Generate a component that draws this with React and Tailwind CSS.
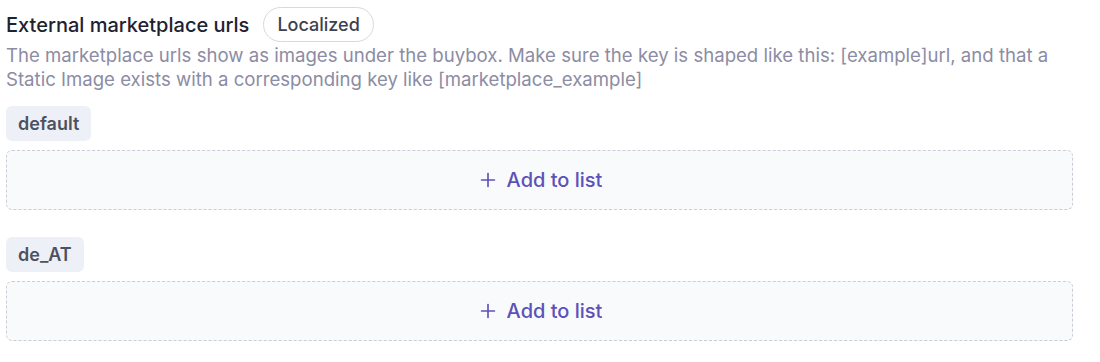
import { Plus } from "lucide-react"

const locales = ["default", "de_AT"]

function LocaleList({ name }) {
    return (
        <div className="flex flex-col items-start">
            <span className="h-[35px] px-3 flex items-center rounded-md bg-[#edf0f6] text-[18px] font-semibold text-[#4d5261]">
                {name}
            </span>
            <button className="mt-[9px] w-full h-[60px] flex items-center justify-center gap-[8px] rounded-md border border-dashed border-[#c9cdd4] bg-[#f8fafc] text-[#5d51b8] text-[20px] font-medium">
                <Plus size={22} strokeWidth={1.8} />
                Add to list
            </button>
        </div>
    )
}

export default function App() {
    return (
        <div className="w-[1100px] h-[362px] bg-white pl-[6px] pr-[27px] pt-[7px] font-['Inter',sans-serif]">
            {/* Header */}
            <div className="flex items-center gap-[14px]">
                <h3 className="text-[20px] font-medium text-[#1e2130]">External marketplace urls</h3>
                <span className="h-[35px] px-[13px] flex items-center rounded-full border border-[#d6d9df] text-[18px] font-medium text-[#3d414c]">
                    Localized
                </span>
            </div>
            <p className="mt-[1px] text-[18.6px] leading-[24px] text-[#8c8ca4]">
                The marketplace urls show as images under the buybox. Make sure the key is shaped like this: [example]url, and that a Static Image exists with a corresponding key like [marketplace_example]
            </p>

            {/* Locale lists */}
            <div className="mt-[15px] flex flex-col gap-[27px]">
                {locales.map((l) => (
                    <LocaleList key={l} name={l} />
                ))}
            </div>
        </div>
    )
}
